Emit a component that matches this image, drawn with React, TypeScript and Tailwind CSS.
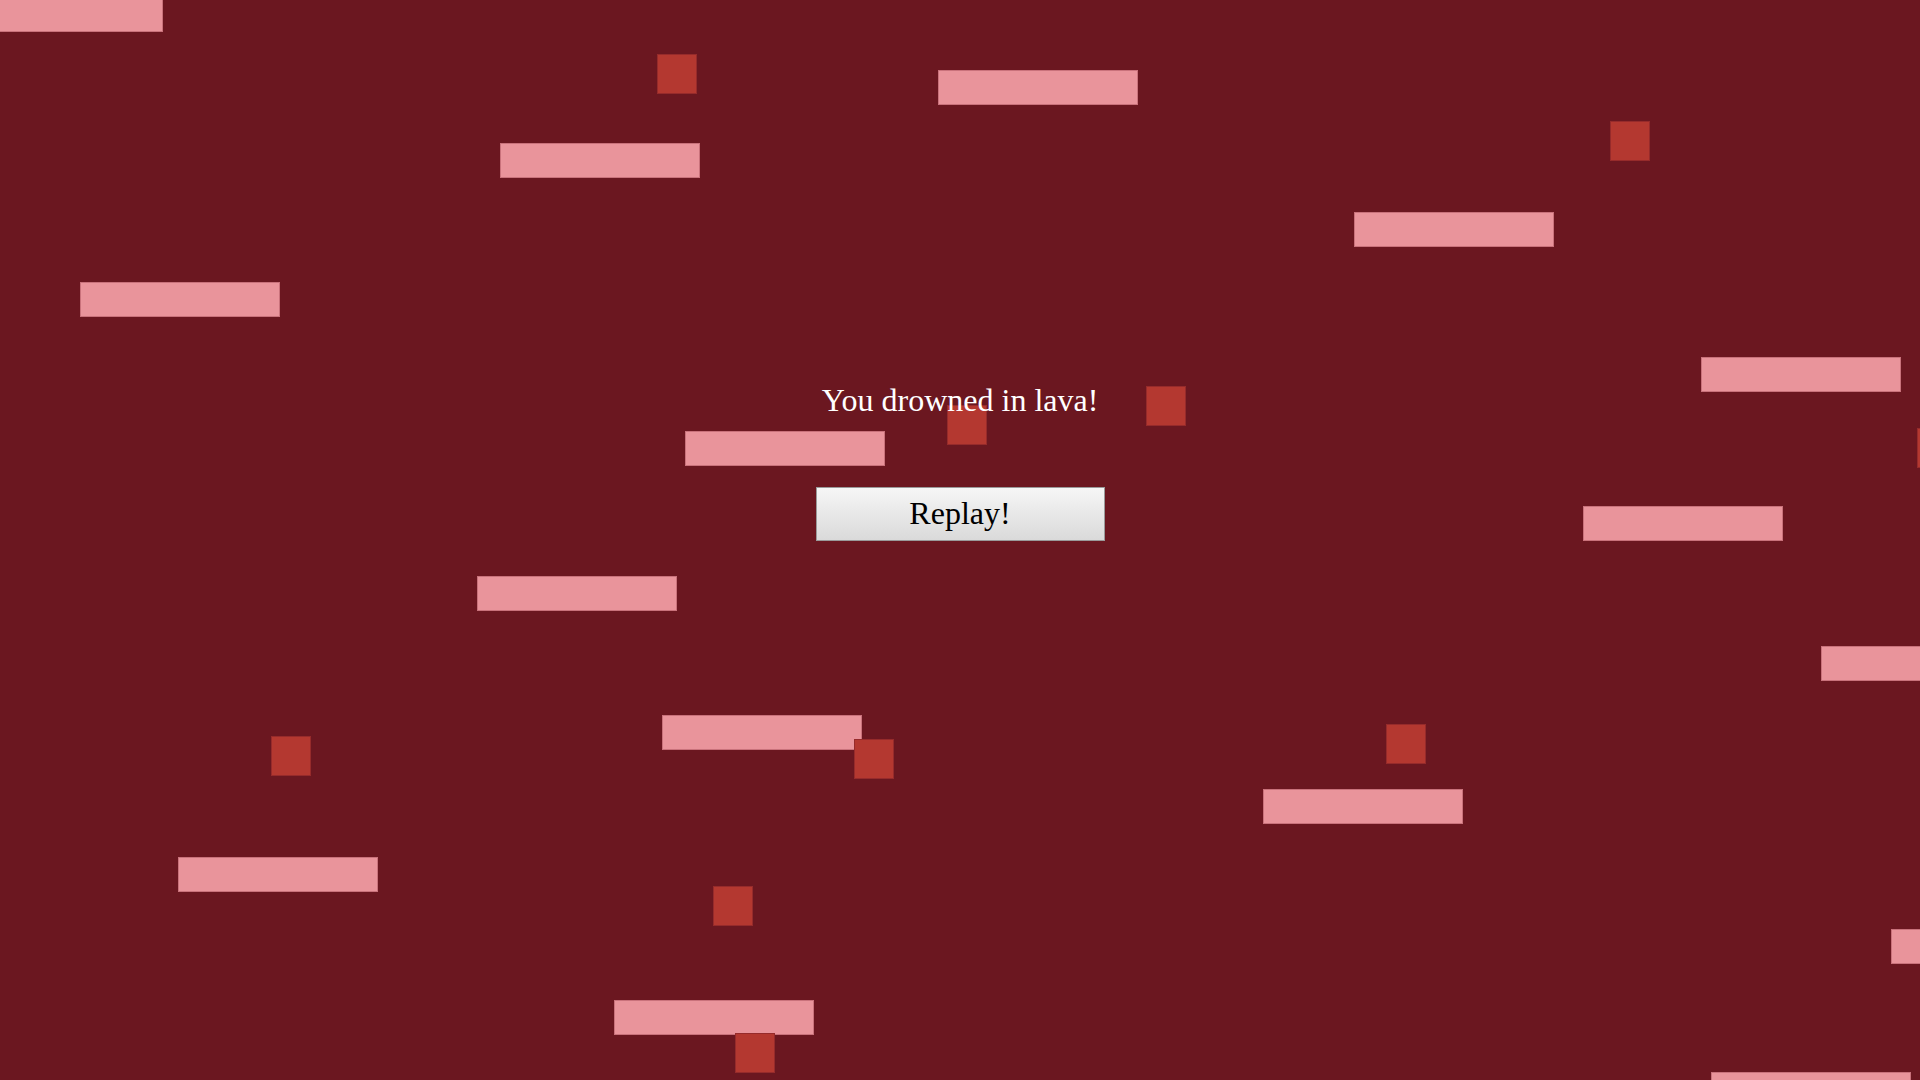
import React from "react";

// platforms are 200x35, lava blobs 40x40 — positions are world coords at the moment of death
const platforms: [number, number][] = [
  [-37, -3],
  [938, 70],
  [500, 143],
  [1354, 212],
  [80, 282],
  [1701, 357],
  [685, 431],
  [1583, 506],
  [477, 576],
  [1821, 646],
  [662, 715],
  [1263, 789],
  [178, 857],
  [1891, 929],
  [614, 1000],
  [1711, 1072],
];

const blobs: [number, number][] = [
  [657, 54],
  [1610, 121],
  [1146, 386],
  [947, 405],
  [1917, 428],
  [271, 736],
  [854, 739],
  [1386, 724],
  [713, 886],
  [735, 1033],
];

export default function App() {
  return (
    <div className="relative h-[1080px] w-[1920px] overflow-hidden bg-[#6b1720] font-['Liberation_Serif',serif]">
      {/* World */}
      {platforms.map(([x, y], idx) => (
        <div
          key={"p" + idx}
          className="absolute h-[35px] w-[200px] border border-[#c9727b] bg-[#e9949b]"
          style={{ left: x, top: y }}
        />
      ))}
      {blobs.map(([x, y], idx) => (
        <div
          key={"b" + idx}
          className="absolute h-[40px] w-[40px] border border-[#962b2b] bg-[#b43830]"
          style={{ left: x, top: y }}
        />
      ))}

      {/* Game over overlay */}
      <div className="absolute inset-x-0 top-[382px] flex flex-col items-center">
        <p className="text-[32px] leading-[37px] text-white">You drowned in lava!</p>
        <button className="mt-[68px] flex h-[54px] w-[289px] items-center justify-center border border-[#9a9a9a] bg-gradient-to-b from-[#f6f6f6] to-[#dadada] pb-[3px] text-[32px] leading-none text-black">
          Replay!
        </button>
      </div>
    </div>
  );
}
